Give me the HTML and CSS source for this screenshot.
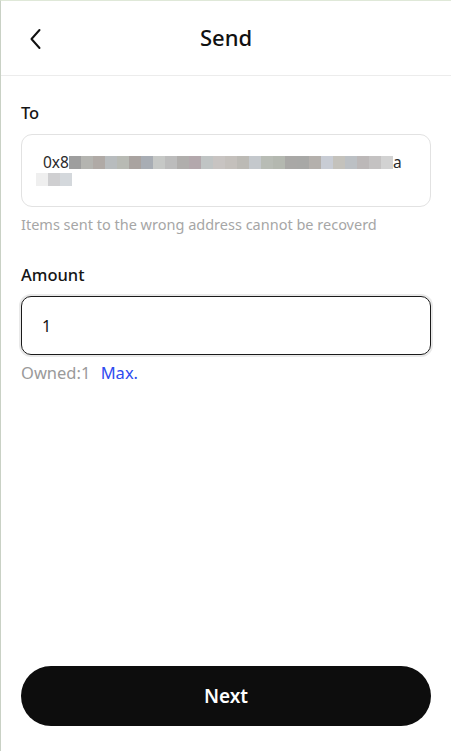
FILE: index.html
```html
<!DOCTYPE html>
<html lang="en">
<head>
<meta charset="utf-8">
<title>Send</title>
<link rel="stylesheet" href="styles.css">
</head>
<body>
<div class="page">
  <header class="topbar">
    <button class="back" aria-label="Back">
      <svg width="14" height="22" viewBox="0 0 14 22"><path d="M10.5 2 L2.5 11 L10.5 20" fill="none" stroke="#111" stroke-width="2" stroke-linecap="round" stroke-linejoin="round"/></svg>
    </button>
    <h1 class="title">Send</h1>
  </header>

  <main class="content">
    <div class="label">To</div>
    <div class="address-box">
      <div class="addr-line">
        <span class="addr-text">0x8</span>
        <span class="mosaic">
          <i style="background:#9e9e9e"></i><i style="background:#b4b4b0"></i><i style="background:#b0aaa6"></i><i style="background:#b8bcbe"></i><i style="background:#b8bab4"></i><i style="background:#a9a3a0"></i><i style="background:#a8adb4"></i><i style="background:#c6c8c6"></i><i style="background:#bcbcbc"></i><i style="background:#b0aeac"></i><i style="background:#b3a8ac"></i><i style="background:#c0c4c4"></i><i style="background:#c8c4c2"></i><i style="background:#c4c0bc"></i><i style="background:#bcbab5"></i><i style="background:#c4c8cc"></i><i style="background:#b8bcb5"></i><i style="background:#b4b8b0"></i><i style="background:#a9a8a6"></i><i style="background:#a8a8a6"></i><i style="background:#b4b0ac"></i><i style="background:#c8ccd4"></i><i style="background:#c4c2bc"></i><i style="background:#bcc0c4"></i><i style="background:#bcb8b8"></i><i style="background:#c4c2c2"></i><i style="background:#d2d2d2"></i>
        </span>
        <span class="addr-text">a</span>
      </div>
      <div class="mosaic mosaic-small">
        <i style="background:#efefef"></i><i style="background:#cfcfd1"></i><i style="background:#d4d8dc"></i>
      </div>
    </div>
    <p class="hint">Items sent to the wrong address cannot be recoverd</p>

    <div class="label label-amount">Amount</div>
    <div class="amount-box">1</div>
    <p class="owned">Owned:1 <a class="max" href="#">Max.</a></p>
  </main>

  <footer class="actions">
    <button class="next">Next</button>
  </footer>
</div>
</body>
</html>
```

FILE: styles.css
```css
* { box-sizing: border-box; }
html, body { margin: 0; padding: 0; background: #fff; }
body {
  font-family: "Noto Sans", "Open Sans", sans-serif;
  color: #111;
}
.page {
  min-height: 751px;
  height: 751px;
  border-left: 1px solid #c9d1c5;
  border-top: 1px solid #dfe8d8;
  display: flex;
  flex-direction: column;
}
.topbar {
  height: 75px;
  border-bottom: 1px solid #ececec;
  display: flex;
  align-items: center;
  justify-content: center;
  position: relative;
}
.back {
  position: absolute;
  left: 27px;
  top: 26px;
  border: 0;
  background: none;
  padding: 0;
  width: 16px;
  height: 24px;
  display: flex;
  align-items: center;
  justify-content: center;
}
.title {
  margin: 0 0 2px 0;
  font-size: 22px;
  font-weight: 500;
  line-height: 30px;
  color: #111;
}
.content {
  padding: 26px 20px 0;
  display: flex;
  flex-direction: column;
}
.label {
  font-size: 16.5px;
  font-weight: 500;
  line-height: 22px;
  color: #151515;
}
.label-amount { margin-top: 30px; }
.address-box {
  margin-top: 10px;
  height: 73px;
  border: 1px solid #e2e2e2;
  border-radius: 11px;
  padding: 16px 20px 0 14px;
}
.addr-line {
  display: flex;
  align-items: center;
  height: 22px;
  padding-left: 7px;
}
.addr-text {
  font-size: 15.5px;
  line-height: 22px;
  color: #2a2a2a;
}
.mosaic {
  display: flex;
  height: 13px;
  margin-top: 1px;
}
.mosaic i {
  display: block;
  width: 12px;
  height: 100%;
}
.mosaic-small {
  height: 13px;
  margin-top: 0;
}
.hint {
  margin: 7px 0 0;
  font-size: 14.5px;
  line-height: 20px;
  color: #a6a6a6;
}
.amount-box {
  margin-top: 10px;
  height: 59px;
  border: 1.5px solid #1a1a1a;
  border-radius: 10px;
  box-shadow: 0 0 0 2px #e9e9e9;
  padding: 0 20px;
  display: flex;
  align-items: center;
  font-size: 16px;
  color: #111;
}
.owned {
  margin: 8px 0 0;
  font-size: 16.5px;
  line-height: 20px;
  color: #9a9a9a;
}
.max {
  color: #2f4cf0;
  text-decoration: none;
  margin-left: 6px;
}
.actions {
  margin-top: auto;
  padding: 0 20px 25px;
}
.next {
  width: 100%;
  height: 60px;
  border: 0;
  border-radius: 30px;
  background: #0d0d0d;
  color: #fff;
  font-family: "Noto Sans", "Open Sans", sans-serif;
  font-size: 19px;
  font-weight: 600;
}
```
